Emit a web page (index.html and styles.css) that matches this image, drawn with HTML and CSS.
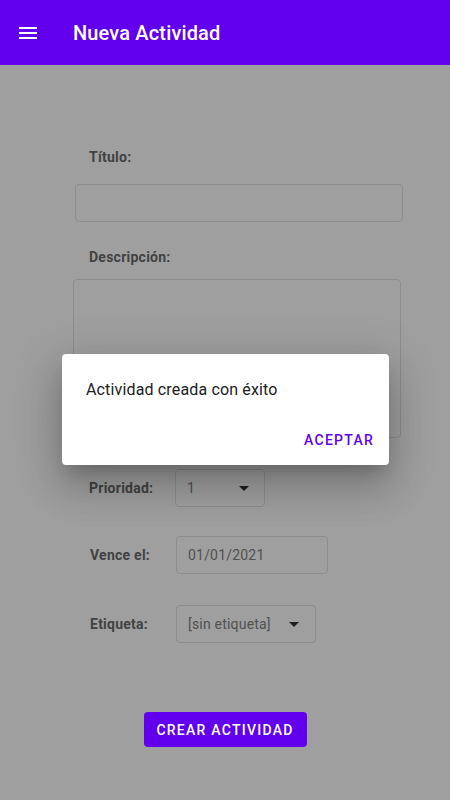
FILE: index.html
```html
<!DOCTYPE html>
<html lang="es">
<head>
<meta charset="utf-8">
<title>Nueva Actividad</title>
<link rel="stylesheet" href="styles.css">
</head>
<body>
<header class="appbar">
  <svg class="menu-icon" width="18" height="12" viewBox="0 0 18 12">
    <rect x="0" y="0" width="18" height="2" fill="#fff"/>
    <rect x="0" y="5" width="18" height="2" fill="#fff"/>
    <rect x="0" y="10" width="18" height="2" fill="#fff"/>
  </svg>
  <h1 class="appbar-title">Nueva Actividad</h1>
</header>
<main class="form">
  <div class="label label-title">Título:</div>
  <div class="field field-title"></div>
  <div class="label label-desc">Descripción:</div>
  <div class="field field-desc"></div>

  <div class="row row-prio">
    <div class="row-label">Prioridad:</div>
    <div class="field select select-prio"><span>1</span><span class="arrow"></span></div>
  </div>
  <div class="row row-date">
    <div class="row-label">Vence el:</div>
    <div class="field select select-date"><span>01/01/2021</span></div>
  </div>
  <div class="row row-tag">
    <div class="row-label">Etiqueta:</div>
    <div class="field select select-tag"><span>[sin etiqueta]</span><span class="arrow"></span></div>
  </div>

  <div class="actions">
    <button class="primary-btn">CREAR ACTIVIDAD</button>
  </div>
</main>

<div class="dialog">
  <p class="dialog-text">Actividad creada con éxito</p>
  <div class="dialog-actions">
    <button class="text-btn">ACEPTAR</button>
  </div>
</div>
</body>
</html>
```
FILE: styles.css
```css
* { box-sizing: border-box; }
html, body {
  margin: 0;
  padding: 0;
  height: 100%;
}
body {
  font-family: Roboto, "Noto Sans", "Liberation Sans", sans-serif;
  background: #9f9f9f;
  position: relative;
  overflow: hidden;
}
.appbar {
  height: 65px;
  background: #6200ee;
  display: flex;
  align-items: center;
  padding-left: 19px;
}
.menu-icon { display: block; margin-top: 0; }
.appbar-title {
  margin: 0 0 0 36px;
  color: #fff;
  font-size: 20px;
  font-weight: 500;
  letter-spacing: 0.15px;
  line-height: 24px;
}
.form {
  padding-top: 82px;
}
.label {
  margin-left: 89px;
  font-size: 14px;
  font-weight: 700;
  line-height: 20px;
  height: 20px;
  color: #424242;
  letter-spacing: 0.25px;
}
.label-desc { margin-top: 25px; }
.field {
  border: 1px solid #8c8c8c;
  border-radius: 4px;
}
.field-title {
  margin: 17px 0 0 75px;
  width: 328px;
  height: 38px;
}
.field-desc {
  margin: 12px 0 0 73px;
  width: 328px;
  height: 159px;
}
.row {
  display: flex;
  align-items: center;
  height: 38px;
  padding-left: 90px;
}
.row-prio { margin-top: 31px; padding-left: 89px; }
.row-date { margin-top: 29px; }
.row-tag { margin-top: 31px; }
.row-label {
  width: 86px;
  font-size: 14px;
  font-weight: 700;
  color: #424242;
  line-height: 20px;
  letter-spacing: 0.25px;
}
.select {
  height: 38px;
  display: flex;
  align-items: center;
  justify-content: space-between;
  padding: 0 15px 0 11px;
  font-size: 14px;
  color: #505050;
  letter-spacing: 0.2px;
}
.select-prio { width: 90px; }
.select-date { width: 152px; }
.select-tag { width: 140px; padding-right: 16px; }
.arrow {
  width: 0;
  height: 0;
  border-left: 5px solid transparent;
  border-right: 5px solid transparent;
  border-top: 5px solid #1e1e1e;
  margin-top: 1px;
}
.actions {
  display: flex;
  justify-content: center;
  margin-top: 69px;
}
.primary-btn {
  width: 163px;
  height: 35px;
  border: none;
  border-radius: 4px;
  background: #6200ee;
  color: #fff;
  font-family: inherit;
  font-size: 14px;
  font-weight: 500;
  letter-spacing: 1.25px;
  padding: 0;
}
.dialog {
  position: absolute;
  left: 62px;
  top: 354px;
  width: 327px;
  height: 111px;
  background: #fff;
  border-radius: 4px;
  box-shadow: 0 11px 15px -7px rgba(0,0,0,0.2), 0 24px 38px 3px rgba(0,0,0,0.14), 0 9px 46px 8px rgba(0,0,0,0.12);
  display: flex;
  flex-direction: column;
}
.dialog-text {
  margin: 0;
  padding: 24px 24px 0 24px;
  font-size: 16px;
  line-height: 24px;
  color: #212121;
  letter-spacing: 0.15px;
}
.dialog-actions {
  margin-top: auto;
  display: flex;
  justify-content: flex-end;
  padding: 0 7px 7px 0;
}
.text-btn {
  height: 36px;
  border: none;
  background: transparent;
  color: #6200ee;
  font-family: inherit;
  font-size: 14px;
  font-weight: 500;
  letter-spacing: 1.25px;
  padding: 0 8px;
}
```
